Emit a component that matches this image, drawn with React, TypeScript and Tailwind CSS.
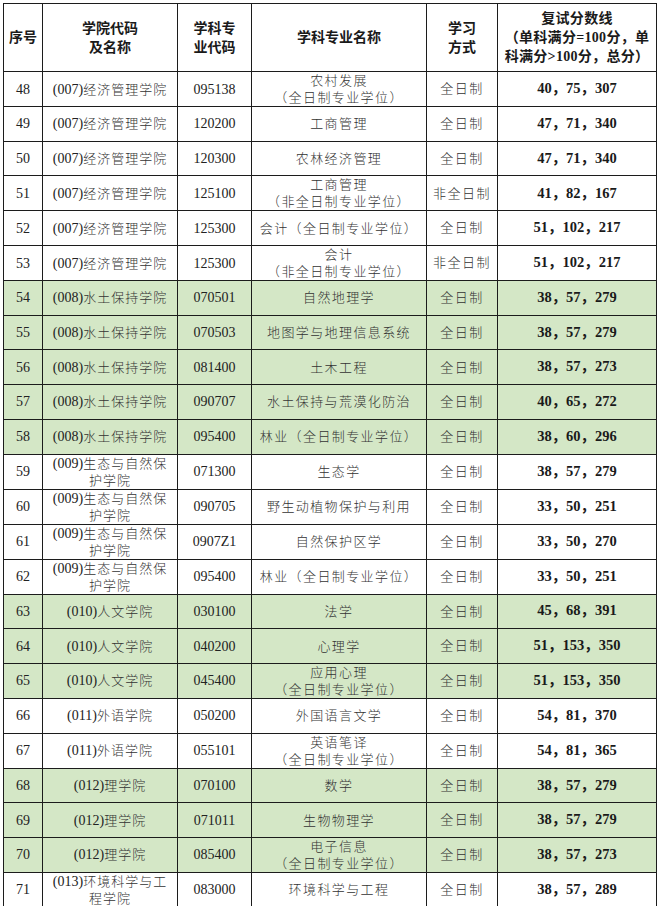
import React from 'react'

type Row = {
  no: number
  code: string
  college: string[]
  major: string
  name: string[]
  mode: string
  score: string
  green?: boolean
}

const rows: Row[] = [
  { no: 48, code: '(007)', college: ['经济管理学院'], major: '095138', name: ['农村发展', '（全日制专业学位）'], mode: '全日制', score: '40，75，307' },
  { no: 49, code: '(007)', college: ['经济管理学院'], major: '120200', name: ['工商管理'], mode: '全日制', score: '47，71，340' },
  { no: 50, code: '(007)', college: ['经济管理学院'], major: '120300', name: ['农林经济管理'], mode: '全日制', score: '47，71，340' },
  { no: 51, code: '(007)', college: ['经济管理学院'], major: '125100', name: ['工商管理', '（非全日制专业学位）'], mode: '非全日制', score: '41，82，167' },
  { no: 52, code: '(007)', college: ['经济管理学院'], major: '125300', name: ['会计（全日制专业学位）'], mode: '全日制', score: '51，102，217' },
  { no: 53, code: '(007)', college: ['经济管理学院'], major: '125300', name: ['会计', '（非全日制专业学位）'], mode: '非全日制', score: '51，102，217' },
  { no: 54, code: '(008)', college: ['水土保持学院'], major: '070501', name: ['自然地理学'], mode: '全日制', score: '38，57，279', green: true },
  { no: 55, code: '(008)', college: ['水土保持学院'], major: '070503', name: ['地图学与地理信息系统'], mode: '全日制', score: '38，57，279', green: true },
  { no: 56, code: '(008)', college: ['水土保持学院'], major: '081400', name: ['土木工程'], mode: '全日制', score: '38，57，273', green: true },
  { no: 57, code: '(008)', college: ['水土保持学院'], major: '090707', name: ['水土保持与荒漠化防治'], mode: '全日制', score: '40，65，272', green: true },
  { no: 58, code: '(008)', college: ['水土保持学院'], major: '095400', name: ['林业（全日制专业学位）'], mode: '全日制', score: '38，60，296', green: true },
  { no: 59, code: '(009)', college: ['生态与自然保', '护学院'], major: '071300', name: ['生态学'], mode: '全日制', score: '38，57，279' },
  { no: 60, code: '(009)', college: ['生态与自然保', '护学院'], major: '090705', name: ['野生动植物保护与利用'], mode: '全日制', score: '33，50，251' },
  { no: 61, code: '(009)', college: ['生态与自然保', '护学院'], major: '0907Z1', name: ['自然保护区学'], mode: '全日制', score: '33，50，270' },
  { no: 62, code: '(009)', college: ['生态与自然保', '护学院'], major: '095400', name: ['林业（全日制专业学位）'], mode: '全日制', score: '33，50，251' },
  { no: 63, code: '(010)', college: ['人文学院'], major: '030100', name: ['法学'], mode: '全日制', score: '45，68，391', green: true },
  { no: 64, code: '(010)', college: ['人文学院'], major: '040200', name: ['心理学'], mode: '全日制', score: '51，153，350', green: true },
  { no: 65, code: '(010)', college: ['人文学院'], major: '045400', name: ['应用心理', '（全日制专业学位）'], mode: '全日制', score: '51，153，350', green: true },
  { no: 66, code: '(011)', college: ['外语学院'], major: '050200', name: ['外国语言文学'], mode: '全日制', score: '54，81，370' },
  { no: 67, code: '(011)', college: ['外语学院'], major: '055101', name: ['英语笔译', '（全日制专业学位）'], mode: '全日制', score: '54，81，365' },
  { no: 68, code: '(012)', college: ['理学院'], major: '070100', name: ['数学'], mode: '全日制', score: '38，57，279', green: true },
  { no: 69, code: '(012)', college: ['理学院'], major: '071011', name: ['生物物理学'], mode: '全日制', score: '38，57，279', green: true },
  { no: 70, code: '(012)', college: ['理学院'], major: '085400', name: ['电子信息', '（全日制专业学位）'], mode: '全日制', score: '38，57，273', green: true },
  { no: 71, code: '(013)', college: ['环境科学与工', '程学院'], major: '083000', name: ['环境科学与工程'], mode: '全日制', score: '38，57，289' },
]

const cell = 'border-[1.5px] border-[#1c1c1c] p-0 text-center align-middle'

const App: React.FC = () => {
  return (
    <div className="w-[660px] h-[906px] bg-white pt-[3px] pl-[3px] font-['Liberation_Serif','Noto_Sans_CJK_SC',serif] text-[#333]">
      <table className="table-fixed border-collapse w-[653px]">
        <colgroup>
          <col className="w-[39px]" />
          <col className="w-[135px]" />
          <col className="w-[74px]" />
          <col className="w-[175px]" />
          <col className="w-[71px]" />
          <col className="w-[159px]" />
        </colgroup>
        <thead>
          <tr className="h-[68px] font-bold text-[14px] leading-[19px] text-[#1a1a1a]">
            <th className={cell}>序号</th>
            <th className={cell}>
              学院代码
              <br />
              及名称
            </th>
            <th className={cell}>
              学科专
              <br />
              业代码
            </th>
            <th className={cell}>学科专业名称</th>
            <th className={cell}>
              学习
              <br />
              方式
            </th>
            <th className={cell + ' whitespace-nowrap tracking-[0.3px]'}>
              复试分数线
              <br />
              （单科满分=100分，单
              <br />
              科满分&gt;100分，总分）
            </th>
          </tr>
        </thead>
        <tbody>
          {rows.map((r) => (
            <tr key={r.no} className={'h-[34.7px] ' + (r.green ? 'bg-[#d4e7c6]' : 'bg-white')}>
              <td className={cell + ' text-[14px] text-[#222]'}>{r.no}</td>
              <td className={cell + ' text-[13px] leading-[17px] whitespace-nowrap font-light'}>
                <span className="text-[14px] font-normal text-[#222]">{r.code}</span>
                <span className="tracking-[1px]">{r.college[0]}</span>
                {r.college[1] && (
                  <>
                    <br />
                    <span className="tracking-[1px]">{r.college[1]}</span>
                  </>
                )}
              </td>
              <td className={cell + ' text-[14px] text-[#222]'}>{r.major}</td>
              <td className={cell + ' text-[13px] leading-[17px] tracking-[1.4px] whitespace-nowrap font-light'}>
                {r.name.map((l, i) => (
                  <div key={i}>{l}</div>
                ))}
              </td>
              <td className={cell + ' text-[13px] tracking-[1.5px] font-light'}>{r.mode}</td>
              <td className={cell + ' text-[14.5px] font-bold text-[#1a1a1a]'}>{r.score}</td>
            </tr>
          ))}
        </tbody>
      </table>
    </div>
  )
}

export default App
